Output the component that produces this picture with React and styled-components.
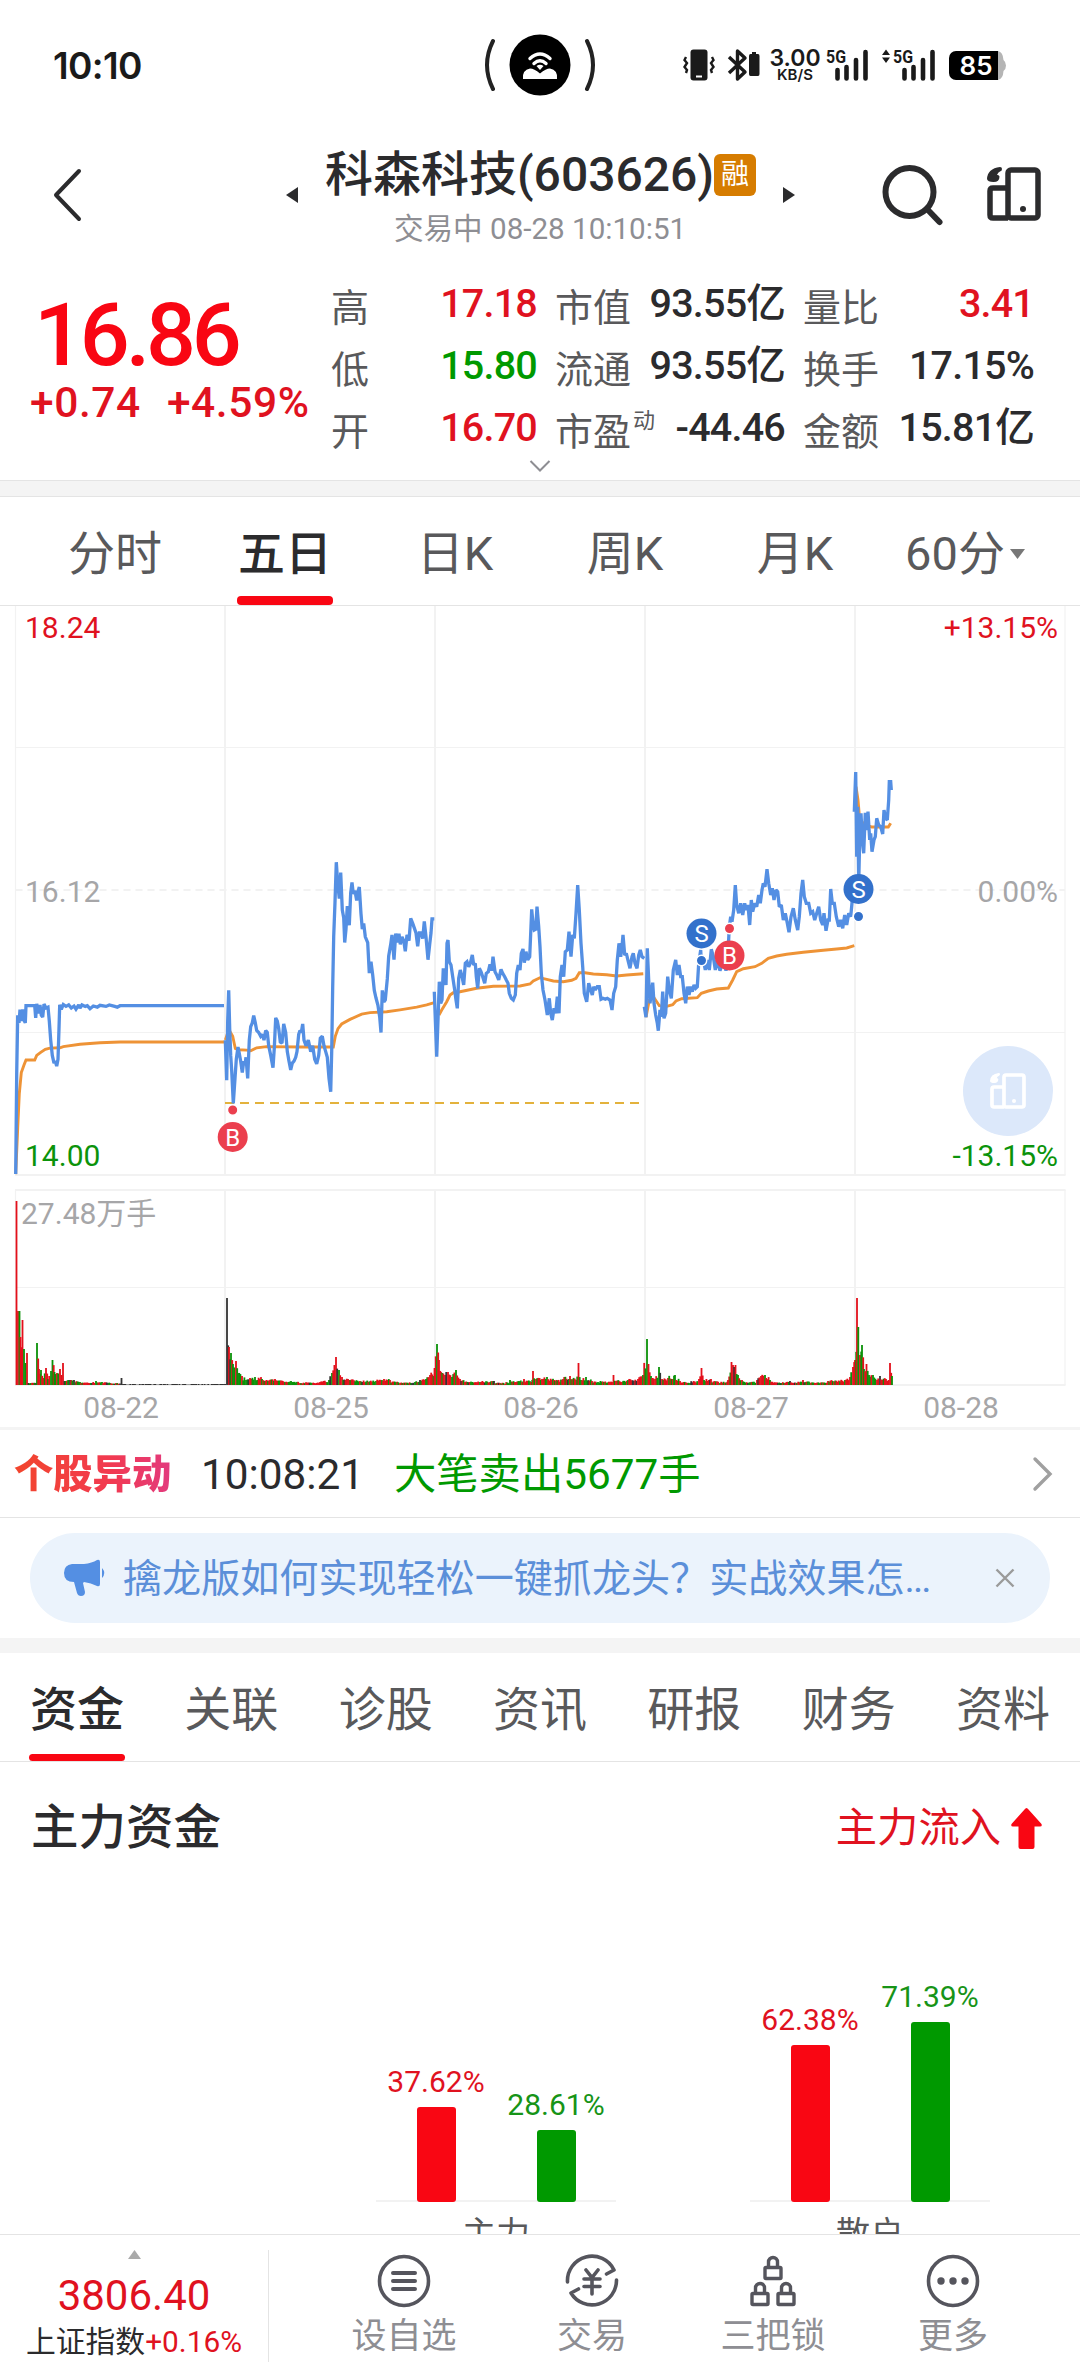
import React from 'react';
import styled, { createGlobalStyle } from 'styled-components';

const COLOR = {
  ink: '#2b2b2d',
  mid: '#59595b',
  weak: '#8e8e93',
  label: '#a6a6a8',
  red: '#f90613',
  textRed: '#e0121f',
  green: '#009900',
  line: '#e4e4e4',
  grid: '#f2f2f2',
  blue: '#548fe3',
  orange: '#ee9336',
};

const GlobalStyle = createGlobalStyle`
  * {
    box-sizing: border-box;
  }

  body {
    margin: 0;
    background: #fff;
    font-family: Roboto, "Noto Sans CJK SC", sans-serif;
    color: ${COLOR.ink};
  }

  svg {
    display: block;
    flex: none;
    overflow: visible;
  }
`

const Screen = styled.div`
  width: 1080px;
  height: 2376px;
  overflow: hidden;
  display: flex;
  flex-direction: column;
  background: #fff;
`

/* ---------- status bar ---------- */

const StatusBar = styled.div`
  height: 130px;
  flex: none;
  padding: 0 74px;
  display: grid;
  grid-template-columns: 1fr 116px 1fr;
  align-items: center;
`

const Clock = styled.div`
  margin-left: -21px;
  font-family: Inter, sans-serif;
  font-size: 37px;
  font-weight: 600;
  letter-spacing: -0.6px;
  color: #1a1a1a;
`

const StatusIcons = styled.div`
  display: flex;
  justify-content: flex-end;
  align-items: center;
`

const IconPair = styled.div`
  display: flex;
  gap: ${props => props.$gap}px;
`

const NetSpeed = styled.div`
  width: 50px;
  margin: 0 7px 0 10px;
  display: flex;
  flex-direction: column;
  align-items: center;
  font-family: Inter, sans-serif;
  font-weight: 600;
  color: #1a1a1a;
  font-size: 23px;
  line-height: 18px;
`

const NetUnit = styled.span`
  font-size: 15px;
  line-height: 15px;
`

const Battery = styled.div`
  width: 49px;
  height: 29px;
  margin-left: 13px;
  padding-left: 5px;
  border-radius: 7px 0 0 7px;
  background: #000;
  color: #fff;
  font: 600 26px/29px Inter, sans-serif;
  text-align: center;
`

/* ---------- header ---------- */

const Header = styled.header`
  height: 140px;
  flex: none;
  padding: 0 39px 0 53px;
  display: flex;
  align-items: flex-start;
`

const BackButton = styled.div`
  padding-top: 38px;
`

const HeaderCenter = styled.div`
  width: 508px;
  margin-left: 204px;
  display: grid;
  grid-template-columns: 39px 1fr 39px;
`

const Arrow = styled.div`
  padding-top: 57px;
  display: flex;
  justify-content: ${props => (props.$right ? 'flex-end' : 'flex-start')};
`

const TitleRow = styled.div`
  height: 78px;
  padding-top: 12px;
  display: flex;
  align-items: center;
  white-space: nowrap;
  font-size: 48px;
  font-weight: 500;
  line-height: 66px;
`

const MarginBadge = styled.span`
  width: 42px;
  height: 42px;
  margin-bottom: 1px;
  border-radius: 6px;
  background: #d67c00;
  color: #fff;
  font-size: 28px;
  font-weight: 400;
  line-height: 41px;
  text-align: center;
`

const SubTitle = styled.div`
  margin: 0 0 0 -1px;
  text-align: center;
  font-size: 29.6px;
  line-height: 42px;
  color: ${COLOR.weak};
  white-space: nowrap;
`

const HeaderActions = styled.div`
  margin: 37px 0 0 auto;
  display: flex;
  gap: 44px;
`

const SearchButton = styled.div`
  margin-top: -3px;
`

/* ---------- quote ---------- */

const Quote = styled.section`
  height: 210px;
  flex: none;
  padding: 7px 46px 0 30px;
  display: grid;
  grid-template-columns: 283px 206px 230px 231px;
  column-gap: 18px;
`

const PriceBlock = styled.div`
  color: ${COLOR.red};
  white-space: nowrap;
`

const Price = styled.div`
  margin-top: 14px;
  padding-left: 4px;
  font-size: 88px;
  font-weight: 500;
  line-height: 88px;
  letter-spacing: -4.2px;
`

const Change = styled.div`
  padding-top: 1px;
  display: flex;
  gap: 26px;
  color: ${COLOR.textRed};
  font-size: 42.5px;
  font-weight: 500;
  line-height: 46px;
  letter-spacing: 0.6px;
`

const QuoteColumn = styled.div`
  display: flex;
  flex-direction: column;
`

const QuoteItem = styled.div`
  height: 62px;
  display: flex;
  justify-content: space-between;
  white-space: nowrap;
`

const QuoteLabel = styled.span`
  font-size: 38px;
  line-height: 62px;
  color: ${COLOR.mid};

  sup {
    font-size: 22px;
    line-height: 20px;
    vertical-align: 17px;
    margin-left: 2px;
  }
`

const QuoteValue = styled.span`
  font-size: 39.5px;
  font-weight: 500;
  line-height: 54px;
  letter-spacing: -0.8px;
  color: ${props => props.$color || COLOR.ink};
`

const Expand = styled.div`
  height: 12px;
  margin-top: -20px;
  flex: none;
  display: flex;
  justify-content: center;
`

const Band = styled.div`
  height: ${props => props.$height}px;
  margin-top: ${props => props.$top || 0}px;
  flex: none;
  background: #f4f4f4;
  border: 0 solid ${COLOR.line};
  border-width: ${props => (props.$lined ? '1px 0' : '0')};
`

/* ---------- tabs ---------- */

const PeriodTabs = styled.nav`
  height: 109px;
  flex: none;
  padding: 0 30px;
  display: grid;
  grid-template-columns: repeat(6, 1fr);
  border-bottom: 1px solid ${COLOR.line};
`

const SectionTabs = styled.nav`
  height: 109px;
  flex: none;
  padding: 0 30px;
  display: flex;
  justify-content: space-between;
  border-bottom: 1px solid ${COLOR.line};
`

const Tab = styled.div`
  height: 108px;
  display: flex;
  flex-direction: column;
  align-items: center;
  justify-content: space-between;
  font-size: 47px;
  line-height: 114px;
  white-space: nowrap;
  font-weight: ${props => (props.$active ? 500 : 400)};
  color: ${props => (props.$active ? COLOR.ink : COLOR.mid)};

  &::after {
    content: "";
    width: 96px;
    height: ${props => props.$bar || 9}px;
    margin: -20px -1px 0;
    border-radius: 4px;
    background: ${props => (props.$active ? COLOR.red : 'transparent')};
  }
`

const TabText = styled.span`
  display: flex;
  align-items: center;
  gap: 5px;
`

/* ---------- chart ---------- */

const ChartArea = styled.section`
  height: 821px;
  flex: none;
  position: relative;
`

const FloatButton = styled.div`
  position: absolute;
  right: 27px;
  top: 440px;
  width: 90px;
  height: 90px;
  border-radius: 50%;
  background: #dce8fa;
  display: flex;
  align-items: center;
  justify-content: center;
`

const ChartText = styled.text`
  font-size: 30px;
  fill: ${props => props.$color || COLOR.label};
`

const MarkerText = styled.text`
  font-size: 24px;
  fill: #fff;
`

/* ---------- news ---------- */

const Movement = styled.div`
  height: 91px;
  flex: none;
  padding: 0 27px 0 14px;
  display: flex;
  align-items: center;
  border-top: 3px solid #f4f4f4;
  border-bottom: 1px solid ${COLOR.line};
  font-size: 42.3px;
  line-height: 60px;
  white-space: nowrap;
`

const MovementTag = styled.span`
  width: 160px;
  padding-top: 2px;
  font-size: 39.3px;
  font-weight: 900;
  background: linear-gradient(90deg, #f2452c, #f23a50 60%, #e23a80);
  background-clip: text;
  color: transparent;
`

const MovementTime = styled.span`
  width: 193px;
  margin-left: 27px;
  padding-top: 3px;
`

const MovementText = styled.span`
  flex: 1;
  padding-top: 3px;
  color: ${COLOR.green};
`

const Notice = styled.div`
  height: 90px;
  flex: none;
  margin: 15px 30px;
  padding: 0 35px 0 34px;
  display: flex;
  align-items: center;
  border-radius: 45px;
  background: #ebf3fc;
  color: #5b8fd9;
`

const NoticeText = styled.span`
  flex: 1;
  margin-left: 16px;
  padding-top: 3px;
  font-size: 39.1px;
  line-height: 87px;
  white-space: nowrap;
`

const Dots = styled.span`
  letter-spacing: -2px;
`

/* ---------- fund ---------- */

const Fund = styled.section`
  height: 472px;
  flex: none;
  overflow: hidden;
  display: flex;
  flex-direction: column;
`

const FundHead = styled.div`
  height: 130px;
  flex: none;
  padding: 2px 38px 0 31px;
  display: flex;
  align-items: center;
  justify-content: space-between;
`

const FundTitle = styled.h2`
  margin: 0;
  font-size: 47.5px;
  font-weight: 500;
  line-height: 70px;
`

const FundFlow = styled.div`
  display: flex;
  align-items: center;
  gap: 10px;
  color: ${COLOR.textRed};
  font-size: 41.3px;
  line-height: 60px;
`

const FundChart = styled.div`
  height: 360px;
  flex: none;
  padding-left: 376px;
  display: flex;
  gap: 134px;
`

const FundGroup = styled.div`
  width: 240px;
`

const FundBars = styled.div`
  height: 310px;
  display: flex;
  align-items: flex-end;
  justify-content: space-around;
  background: linear-gradient(#f2f2f2, #f2f2f2) bottom / 100% 2px no-repeat;
`

const FundColumn = styled.div`
  width: 100px;
  display: flex;
  flex-direction: column;
  align-items: center;
  font-size: 30px;
  line-height: 36px;
  gap: 7px;
  color: ${props => (props.$up ? COLOR.textRed : '#179417')};
`

const FundBar = styled.div`
  width: 39px;
  border-radius: 3px;
  background: ${props => (props.$up ? COLOR.red : COLOR.green)};
`

const FundName = styled.div`
  margin-top: 7px;
  text-align: center;
  font-size: 34px;
  line-height: 50px;
  color: ${COLOR.mid};
`

/* ---------- bottom bar ---------- */

const BottomBar = styled.footer`
  height: 142px;
  flex: none;
  display: flex;
  background: #fff;
  border-top: 1px solid ${COLOR.line};
`

const IndexBox = styled.div`
  width: 269px;
  height: 112px;
  margin-top: 15px;
  border-right: 1px solid ${COLOR.line};
  display: flex;
  flex-direction: column;
  align-items: center;
  white-space: nowrap;
`

const IndexValue = styled.div`
  margin-top: 12px;
  font-size: 42px;
  line-height: 50px;
  color: ${COLOR.textRed};
`

const IndexName = styled.div`
  font-size: 29.8px;
  line-height: 42px;

  span {
    color: ${COLOR.textRed};
  }
`

const Actions = styled.div`
  margin-left: 41px;
  display: grid;
  grid-template-columns: 188px 188px 174px 186px;
`

const Action = styled.div`
  padding-top: 19px;
  display: flex;
  flex-direction: column;
  align-items: center;
  font-size: 35px;
  line-height: 58px;
  color: ${COLOR.weak};
`

/* ---------- icons ---------- */

const HotspotIcon = () => (
  <svg width="116" height="64" viewBox="0 0 116 64">
    <path d="M11 8Q-1 32 11 56M105 8q12 24 0 48" fill="none" stroke="#222" strokeWidth="4" strokeLinecap="round" />
    <circle cx="58" cy="32" r="30.5" fill="#000" />
    <path d="M48 25.500q10-9 20 0M52 30.500q6-5.500 12 0" fill="none" stroke="#fff" strokeWidth="3.400" strokeLinecap="round" />
    <path d="M58 37l-3.500-4q3.500-2.500 7 0z" fill="#fff" />
    <path d="M41 46q-1-9 7-10.500 4 0 10 5 6-5 10-5 8 1.500 7 10.500z" fill="#fff" />
  </svg>
)

const VibrateIcon = () => (
  <svg width="32" height="32" viewBox="0 0 32 32">
    <rect x="7.500" y="0.500" width="17" height="31" rx="3" fill="#1a1a1a" />
    <path d="M13 27.500h6" stroke="#fff" strokeWidth="2" />
    <path d="M3 8l-1.500 3L4 14l-2.500 4L4 21l-1 3M29 8l1.500 3L28 14l2.500 4L28 21l1 3" fill="none" stroke="#1a1a1a" strokeWidth="2.400" />
  </svg>
)

const BluetoothIcon = () => (
  <svg width="33" height="32" viewBox="0 0 33 32">
    <path d="M2 8l16 15-7.500 7V2l7.500 7L2 24" fill="none" stroke="#1a1a1a" strokeWidth="3.400" strokeLinejoin="round" />
    <path d="M25 3h4v2h2q1.500 0 1.500 2v18q0 2-1.500 2h-7.500q-1.500 0-1.500-2V7q0-2 1.500-2H25z" fill="#1a1a1a" />
  </svg>
)

const SignalIcon = ({arrows}) => (
  <svg width={arrows ? 54 : 42} height="32" viewBox={arrows ? '-12 0 54 32' : '0 0 42 32'}>
    {arrows && <path d="M-12 6l4-5.500L-4 6zM-12 8.500l4 5.500 4-5.500z" fill="#1a1a1a" />}
    <text x="-1" y="13.500" fontSize="18" fontWeight="700" fill="#1a1a1a" textLength="20" lengthAdjust="spacingAndGlyphs">5G</text>
    <path d="M10.500 21v8.500M19.500 18v11.500M29 11v18.500M38.500 3v26.500" stroke="#1a1a1a" strokeWidth="4.600" strokeLinecap="round" />
  </svg>
)

const BackIcon = () => (
  <svg width="29" height="54" viewBox="0 0 29 54">
    <path d="M26 3L3 27l23 24" fill="none" stroke={COLOR.ink} strokeWidth="4" strokeLinecap="round" strokeLinejoin="round" />
  </svg>
)

const SearchIcon = () => (
  <svg width="61" height="62" viewBox="0 0 61 62">
    <circle cx="27.500" cy="28" r="24" fill="none" stroke={COLOR.ink} strokeWidth="6" />
    <path d="M45 45l12.500 13" stroke={COLOR.ink} strokeWidth="6" strokeLinecap="round" />
  </svg>
)

const BoardIcon = ({size, color}) => (
  <svg width={size} height={size} viewBox="0 0 54 54">
    <g fill="none" stroke={color} strokeWidth="5.500" strokeLinejoin="round">
      <rect x="21" y="3" width="30" height="48" rx="3" />
      <path d="M21 21H6q-3 0-3 3v24q0 3 3 3h15" />
    </g>
    <circle cx="36" cy="42" r="3" fill={color} />
    <path d="M13 0q2 0 2 2t-2 2.500-3 3.500q2-.5 2.500 1.500 0 5.500-6 5.500T0 12Q.5 1.500 13 0z" fill={color} />
  </svg>
)

const HornIcon = () => (
  <svg width="43" height="38" viewBox="0 0 43 38">
    <path d="M0 14Q0 6 8 5h12q8-1 13-4 3-1 3 2v22q0 3-3 2-6-3-13-4l-1 1 2 9q0 4-4 4-3 0-4-3L10 23Q0 23 0 14z" fill={COLOR.blue} />
    <path d="M38 9q4.500 5 0 10z" fill={COLOR.blue} />
  </svg>
)

const ListIcon = () => (
  <svg width="54" height="54" viewBox="0 0 54 54" fill="none" stroke="#55555d">
    <circle cx="27" cy="27" r="24.500" strokeWidth="3.600" />
    <path d="M16 19h22M16 27h22M16 35h22" strokeWidth="4" strokeLinecap="round" />
  </svg>
)

const TradeIcon = () => (
  <svg width="54" height="54" viewBox="0 0 54 54" fill="none" stroke="#55555d" strokeWidth="3.600" strokeLinecap="round">
    <path d="M2.500 28A24.500 24.500 0 0 1 49 16l-7.500 4M51.500 26A24.500 24.500 0 0 1 6 39l7.500-4" strokeLinejoin="round" />
    <path d="M21 16l6 7.500L33 16M19 25h16M19 32.500h16M27 24v16" />
  </svg>
)

const Lock = ({x, y}) => (
  <g transform={`translate(${x} ${y})`}>
    <rect x="1.500" y="11.500" width="16" height="11" rx="1" />
    <path d="M5 11V6a4.500 4.500 0 0 1 9 0v5" />
  </g>
)

const LocksIcon = () => (
  <svg width="54" height="54" viewBox="0 0 54 54" fill="none" stroke="#55555d" strokeWidth="3.400">
    <Lock x={17.5} y={2} />
    <Lock x={4.5} y={28} />
    <Lock x={30.5} y={28} />
  </svg>
)

const MoreIcon = () => (
  <svg width="54" height="54" viewBox="0 0 54 54">
    <circle cx="27" cy="27" r="24.500" fill="none" stroke="#55555d" strokeWidth="3.600" />
    <g fill="#55555d">
      <circle cx="15" cy="27" r="3.700" />
      <circle cx="27" cy="27" r="3.700" />
      <circle cx="39" cy="27" r="3.700" />
    </g>
  </svg>
)

/* ---------- chart data ---------- */

// each series keeps its own sampling grid: origin + units per pixel
const GRID_A = {x: 0, y: 600, kx: 3, ky: 2.613};
const GRID_B = {x: 420, y: 800, kx: 3, ky: 3};
const GRID_C = {x: 640, y: 740, kx: 3, ky: 3};

const PRICES = [
  {grid: GRID_A, data: '47,1500 50,1240 53,1085 57,1105 60,1070 64,1100 68,1070 72,1098 76,1105 78,1060 104,1060 107,1092 110,1055 116,1080 120,1058 124,1085 128,1090 132,1056 138,1066 144,1064 148,1100 152,1150 157,1190 162,1210 166,1205 170,1218 174,1200 177,1120 179,1058 184,1070 190,1057 198,1062 206,1058 214,1066 222,1061 228,1069 236,1058 240,1066 246,1058 256,1062 262,1060 270,1068 280,1061 292,1064 300,1059 318,1062 328,1058 344,1062 352,1064 360,1060 672,1060'},
  {grid: GRID_A, data: '676,1150 680,1255 683,1100 686,1020 689,1120 692,1190 695,1230 700,1315 705,1250 709,1200 714,1168 718,1185 722,1205 727,1235 731,1205 735,1215 738,1195 743,1250 748,1150 752,1115 757,1105 761,1086 766,1105 770,1125 776,1130 782,1140 787,1135 792,1150 797,1125 802,1130 806,1165 812,1190 819,1222 823,1170 827,1092 832,1100 836,1120 841,1155 846,1158 851,1108 857,1130 862,1180 867,1205 872,1228 877,1210 882,1205 887,1195 891,1180 896,1135 900,1125 904,1130 908,1108 912,1150 918,1165 925,1150 932,1180 938,1165 944,1200 950,1212 956,1190 961,1145 967,1140 972,1165 977,1180 982,1195 987,1250 992,1285 995,1180 998,1010 1001,880 1005,790 1009,685 1013,740 1018,780 1022,712 1027,810 1031,830 1034,895 1038,860 1042,800 1048,850 1052,765 1056,738 1060,768 1065,760 1070,785 1074,762 1078,750 1083,820 1087,860 1091,845 1096,880 1103,895 1108,975 1113,945 1118,980 1123,1020 1128,1040 1134,1060 1139,1090 1143,1130 1147,1020 1152,1050 1156,1045 1162,990 1166,930 1172,900 1176,875 1182,940 1187,872 1193,895 1197,872 1201,900 1206,880 1211,890 1216,918 1221,875 1227,890 1232,832 1238,845 1244,860 1248,870 1253,905 1258,870 1264,870 1268,885 1273,840 1278,880 1284,940 1289,900 1293,870 1296,833 1303,833'},
  {grid: GRID_B, data: '43,575 50,770 54,660 58,545 62,610 66,600 70,505 74,530 78,555 81,430 84,420 88,485 93,495 98,530 104,570 108,600 112,625 116,535 121,510 126,530 131,555 136,490 141,485 146,500 151,490 157,465 161,495 166,490 169,530 173,565 178,505 183,515 188,530 194,550 199,520 205,515 210,493 215,512 219,470 225,515 230,525 236,540 243,508 248,520 254,530 259,540 264,550 268,580 274,595 280,600 286,585 290,520 295,495 300,510 304,460 309,447 313,488 318,455 323,480 329,470 332,400 335,328 339,370 343,390 347,388 351,320 356,380 360,440 364,520 369,570 375,600 382,645 388,595 392,640 397,660 402,625 407,640 412,590 417,640 421,530 426,495 431,530 436,455 442,450 447,395 453,470 458,405 463,415 468,340 473,255 478,330 483,430 488,500 493,580 500,605 506,550 512,570 517,585 521,560 526,570 532,560 538,560 543,598 549,595 556,598 562,595 570,600 576,630 581,580 587,560 592,480 597,430 602,470 606,440 609,405 614,465 619,460 625,485 630,505 636,470 640,460 645,490 651,505 656,465 661,450 666,470 673,475'},
  {grid: GRID_C, data: '13,800 18,832 22,625 26,720 30,790 38,728 42,790 47,825 52,850 55,872 60,810 64,830 68,755 72,835 77,820 83,710 88,750 94,775 100,690 107,660 112,705 117,675 122,710 127,710 132,760 137,790 142,740 147,765 152,740 157,755 162,735 167,745 172,740 176,670 182,630 184,665 190,660 196,690 202,660 208,690 214,628 220,650 226,690 232,660 240,692 250,660 258,692 264,640 268,560 272,530 276,545 281,510 286,435 290,495 296,520 302,490 308,525 314,490 318,510 324,495 329,555 334,480 338,515 344,490 350,500 356,465 361,490 366,450 370,430 375,440 381,388 386,430 392,465 397,445 402,480 408,450 413,455 418,500 424,495 430,540 436,520 442,550 447,577 453,530 460,505 466,540 473,570 478,530 483,460 488,420 493,470 499,490 506,490 512,520 518,515 524,540 530,520 536,500 542,540 548,555 552,520 558,572 564,540 568,540 572,447 577,490 583,490 589,530 596,560 602,540 608,565 614,525 620,555 626,520 632,530 637,480'},
  {grid: GRID_C, data: '643,215 647,96 650,350 653,200 656,430 659,300 663,220 667,300 671,340 676,218 680,270 684,215 689,300 692,280 696,335 702,300 706,290 710,235 716,255 722,260 728,282 732,210 737,235 742,240 746,180 748,125 752,125 754,150'},
];

const AVERAGES = [
  {grid: GRID_A, data: '47,1500 53,1380 58,1290 64,1235 72,1215 78,1202 104,1202 110,1190 122,1182 136,1174 150,1171 180,1170 190,1167 240,1161 300,1157 360,1155 672,1155'},
  {grid: GRID_A, data: '676,1150 682,1135 690,1128 698,1140 706,1172 716,1175 740,1176 752,1178 770,1170 800,1167 900,1168 1000,1168 1006,1140 1014,1120 1025,1108 1050,1096 1085,1082 1110,1078 1160,1076 1200,1071 1250,1064 1280,1058 1303,1052'},
  {grid: GRID_B, data: '57,645 65,630 80,605 90,585 100,578 120,575 170,565 220,559 300,558 330,552 340,543 360,533 380,538 400,543 430,545 455,541 468,535 478,518 495,518 520,522 560,524 590,528 620,525 670,521'},
  {grid: GRID_C, data: '18,832 28,780 40,770 50,785 58,797 80,799 98,794 108,783 125,776 172,773 184,760 205,753 230,747 265,744 278,720 290,695 310,686 345,680 365,670 385,655 410,648 440,643 490,637 550,631 590,627 620,624 643,617'},
  {grid: GRID_C, data: '648,140 654,180 658,225 664,245 680,255 695,261 745,261 752,250'},
];

const toPoints = ({grid, data}) =>
  data.split(' ').map(pair => {
    const [x, y] = pair.split(',').map(Number);
    return `${(grid.x + x / grid.kx).toFixed(1)},${(grid.y + y / grid.ky).toFixed(1)}`;
  }).join(' ');

// x, height and side of the bars that stand out; the ones between are filled in
const VOLUME_KEYS = [
  [16.5, 184, 'r'], [18, 74, 'r'], [19.5, 74, 'g'], [20.5, 48, 'r'], [22.5, 65, 'r'], [24, 36, 'g'], [25.5, 22, 'g'], [27, 32, 'r'], [28.5, 2, 'k'], [36, 2, 'k'], [37, 42, 'g'], [39, 16, 'r'], [41, 15, 'g'], [43.5, 7, 'r'], [46, 17, 'r'], [48, 6, 'g'], [51, 14, 'g'], [52.5, 25, 'g'], [54.5, 13, 'g'], [57, 12, 'r'], [60, 16, 'r'], [61.5, 10, 'r'], [63, 22, 'r'], [64.5, 4, 'k'],
  [70, 5, 'k'], [74, 5, 'k'], [80, 3, 'g'], [92, 2, 'k'], [96, 4, 'g'], [102, 3, 'g'], [110, 2, 'g'], [120, 1.5, 'k'], [121.5, 7, 'k'], [123, 1, 'k'], [224, 1, 'k'],
  [227, 87, 'k'], [229, 38, 'r'], [231, 32, 'g'], [233, 21, 'g'], [236, 24, 'r'], [238, 12, 'g'], [242, 9, 'r'], [246, 5, 'g'], [250, 7, 'r'], [255, 8, 'g'], [262, 6, 'g'], [268, 4, 'g'], [275, 6, 'r'], [285, 3, 'g'], [291, 4, 'g'], [300, 2, 'r'], [320, 3, 'r'], [329, 5, 'g'], [332, 12, 'g'], [336, 28, 'r'], [339, 15, 'g'], [342, 8, 'r'], [348, 6, 'r'], [360, 4, 'r'], [376, 4, 'g'], [384, 6, 'r'], [390, 5, 'r'], [400, 2, 'r'], [415, 3, 'g'], [420, 5, 'k'], [426, 6, 'g'], [430, 10, 'r'], [434.5, 17, 'r'],
  [437, 41, 'g'], [439, 25, 'r'], [441, 13, 'r'], [445, 10, 'r'], [448, 13, 'r'], [452, 8, 'g'], [456, 15, 'g'], [460, 6, 'r'], [465, 3, 'r'], [480, 3, 'g'], [494, 4, 'k'], [505, 1, 'r'], [510, 5, 'g'], [516, 3, 'r'], [524, 6, 'r'], [531, 3, 'r'], [533, 14, 'r'], [536, 6, 'r'], [547, 8, 'g'], [555, 4, 'g'], [563, 6, 'r'], [570, 9, 'r'], [576, 5, 'r'], [578.5, 22, 'r'], [581, 5, 'g'], [586, 8, 'g'], [592, 4, 'r'], [604, 3, 'g'], [612, 3, 'r'], [613.5, 10, 'r'], [616, 4, 'r'], [628, 5, 'g'], [638, 6, 'r'], [643, 10, 'g'],
  [647, 46, 'g'], [648.5, 21, 'r'], [651, 9, 'g'], [655, 6, 'r'], [659, 18, 'g'], [662, 6, 'r'], [668, 7, 'r'], [675, 10, 'g'], [680, 4, 'r'], [690, 2, 'g'], [699, 6, 'r'], [701.5, 17, 'r'], [704, 5, 'g'], [711, 6, 'r'], [720, 2, 'g'], [728, 5, 'r'], [731.5, 23, 'r'], [733, 20, 'r'], [735.5, 20, 'r'], [738, 10, 'g'], [742, 5, 'r'], [748, 2, 'k'], [757, 5, 'r'], [761, 9, 'r'], [765, 10, 'g'], [770, 5, 'g'], [778, 2, 'k'], [790, 4, 'k'], [797, 2, 'g'], [803, 5, 'r'], [810, 2, 'g'], [828, 4, 'r'], [845, 5, 'g'], [850, 8, 'r'], [853, 18, 'r'], [855, 25, 'r'],
  [857, 87, 'r'], [858.3, 58, 'g'], [860, 30, 'r'], [862, 40, 'g'], [864, 16, 'g'], [866.5, 21, 'r'], [869, 10, 'g'], [873, 10, 'g'], [877, 5, 'r'], [880, 9, 'k'], [886, 6, 'r'], [888.5, 5, 'r'], [890, 22, 'r'], [892, 9, 'g'],
];

const VOLUME_COLOR = {r: '#e3101b', g: '#0a9208', k: '#333'};

const volumeBars = () => {
  const bars = [];
  let seed = 7;
  const random = () => {
    seed = (seed * 16807) % 2147483647;
    return seed / 2147483647;
  };

  VOLUME_KEYS.forEach(([x, h, side], i) => {
    const next = VOLUME_KEYS[i + 1];
    bars.push({x, h, side});
    if (!next) return;
    for (let p = x + 1.2; p < next[0] - 0.7; p += 1.2) {
      const base = Math.min(h, next[1]) + Math.abs(next[1] - h) * 0.35;
      const quiet = p > 123 && p < 226;
      bars.push({
        x: p,
        h: quiet ? (random() > 0.5 ? 1 : 0.3) : base * (0.7 + random() * 0.5),
        side: quiet ? 'k' : (random() > 0.5 ? 'r' : random() > 0.12 ? 'g' : 'k'),
      });
    }
  });
  return bars;
}

const BARS = volumeBars();

const Marker = ({x, y, dotY, side}) => {
  const color = side === 'B' ? '#eb3f4e' : '#3371cb';
  return (
    <g>
      <circle cx={x} cy={dotY} r="5.200" fill={color} stroke="#fff" strokeWidth="1.400" />
      <circle cx={x} cy={y} r="15" fill={color} />
      <MarkerText x={x} y={y + 8.5} textAnchor="middle">{side}</MarkerText>
    </g>
  )
}

const Chart = () => (
  <ChartArea>
    <svg width="1080" height="821" viewBox="0 606 1080 821">
      <g fill="none" stroke={COLOR.grid}>
        <path d="M15.500 606V1175M1065 606V1175M15.500 747.500H1065M15.500 1032.500H1065" strokeWidth="1.200" />
        <path d="M225 606V1175M435 606V1175M645 606V1175M855 606V1175M15 1175H1065.500" strokeWidth="2" />
        <path d="M15.500 890H1065" strokeWidth="2" strokeDasharray="7 5" />
        <path d="M15.500 1190V1385M1065 1190V1385M15.500 1287.500H1065" strokeWidth="1.200" />
        <path d="M225 1190V1385M435 1190V1385M645 1190V1385M855 1190V1385M15 1190H1065.500M15 1385H1065.500" strokeWidth="2" />
      </g>

      <path d="M225 1103H640" stroke="#e3b23c" strokeWidth="2" strokeDasharray="9 6" />

      <g fill="none" strokeLinejoin="miter" strokeMiterlimit="2">
        {AVERAGES.map((series, i) => <polyline key={i} points={toPoints(series)} stroke={COLOR.orange} strokeWidth="2.900" />)}
        {PRICES.map((series, i) => <polyline key={i} points={toPoints(series)} stroke={COLOR.blue} strokeWidth="3.300" />)}
      </g>

      <ChartText x="25" y="638" $color={COLOR.textRed}>18.24</ChartText>
      <ChartText x="25" y="902">16.12</ChartText>
      <ChartText x="25" y="1166" $color="#0b930b">14.00</ChartText>
      <ChartText x="1058" y="638" textAnchor="end" $color={COLOR.textRed}>+13.15%</ChartText>
      <ChartText x="1058" y="902" textAnchor="end">0.00%</ChartText>
      <ChartText x="1058" y="1166" textAnchor="end" $color="#0b930b">-13.15%</ChartText>

      <Marker x={232.7} y={1137} dotY={1110} side="B" />
      <Marker x={701.5} y={933.5} dotY={960.5} side="S" />
      <Marker x={729.5} y={955.5} dotY={928.5} side="B" />
      <Marker x={858.5} y={889} dotY={916.5} side="S" />

      {BARS.map((bar, i) => (
        <rect key={i} x={bar.x - 0.9} y={1385 - bar.h} width="1.800" height={bar.h} fill={VOLUME_COLOR[bar.side]} />
      ))}
      <ChartText x="21" y="1224">27.48万手</ChartText>

      {['08-22', '08-25', '08-26', '08-27', '08-28'].map((day, i) => (
        <ChartText key={day} x={121 + i * 210} y="1418" textAnchor="middle">{day}</ChartText>
      ))}
    </svg>

    <FloatButton>
      <BoardIcon size={36} color="#fff" />
    </FloatButton>
  </ChartArea>
)

/* ---------- page ---------- */

const QUOTES = [
  [['高', '17.18', COLOR.textRed], ['低', '15.80', COLOR.green], ['开', '16.70', COLOR.textRed]],
  [['市值', '93.55亿'], ['流通', '93.55亿'], ['市盈', '-44.46', null, '动']],
  [['量比', '3.41', COLOR.textRed], ['换手', '17.15%'], ['金额', '15.81亿']],
];

const FUNDS = [
  {name: '主力', bars: [{value: '37.62%', height: 95, up: true}, {value: '28.61%', height: 72}]},
  {name: '散户', bars: [{value: '62.38%', height: 157, up: true}, {value: '71.39%', height: 180}]},
];

const App = () => {
  return (
    <Screen>
      <GlobalStyle />

      <StatusBar>
        <Clock>10:10</Clock>
        <HotspotIcon />
        <StatusIcons>
          <IconPair $gap={12}>
            <VibrateIcon />
            <BluetoothIcon />
          </IconPair>
          <NetSpeed>
            3.00
            <NetUnit>KB/S</NetUnit>
          </NetSpeed>
          <IconPair $gap={13}>
            <SignalIcon />
            <SignalIcon arrows />
          </IconPair>
          <Battery>85</Battery>
          <svg width="8" height="29" viewBox="0 0 8 29">
            <path d="M0 0q5 1 5.500 9Q8 11 8 14.500T5.500 20Q5 28 0 29z" fill="#b5b5b5" />
          </svg>
        </StatusIcons>
      </StatusBar>

      <Header>
        <BackButton><BackIcon /></BackButton>
        <HeaderCenter>
          <Arrow>
            <svg width="12" height="16" viewBox="0 0 12 16"><path d="M12 0v16L0 8z" fill={COLOR.ink} /></svg>
          </Arrow>
          <div>
            <TitleRow>
              科森科技(603626)
              <MarginBadge>融</MarginBadge>
            </TitleRow>
            <SubTitle>交易中 08-28 10:10:51</SubTitle>
          </div>
          <Arrow $right>
            <svg width="12" height="16" viewBox="0 0 12 16"><path d="M0 0v16l12-8z" fill={COLOR.ink} /></svg>
          </Arrow>
        </HeaderCenter>
        <HeaderActions>
          <SearchButton><SearchIcon /></SearchButton>
          <BoardIcon size={54} color={COLOR.ink} />
        </HeaderActions>
      </Header>

      <Quote>
        <PriceBlock>
          <Price>16.86</Price>
          <Change>
            <span>+0.74</span>
            <span>+4.59%</span>
          </Change>
        </PriceBlock>
        {QUOTES.map((column, i) => (
          <QuoteColumn key={i}>
            {column.map(([label, value, color, sup]) => (
              <QuoteItem key={label}>
                <QuoteLabel>{label}{sup && <sup>{sup}</sup>}</QuoteLabel>
                <QuoteValue $color={color}>{value}</QuoteValue>
              </QuoteItem>
            ))}
          </QuoteColumn>
        ))}
      </Quote>
      <Expand>
        <svg width="22" height="12" viewBox="0 0 22 12">
          <path d="M1.500 1L11 10.500 20.500 1" fill="none" stroke={COLOR.weak} strokeWidth="2" />
        </svg>
      </Expand>
      <Band $height={17} $top={8} $lined />

      <PeriodTabs>
        <Tab><TabText>分时</TabText></Tab>
        <Tab $active><TabText>五日</TabText></Tab>
        <Tab><TabText>日K</TabText></Tab>
        <Tab><TabText>周K</TabText></Tab>
        <Tab><TabText>月K</TabText></Tab>
        <Tab>
          <TabText>
            60分
            <svg width="15" height="10" viewBox="0 0 15 10"><path d="M0 0h15L7.500 10z" fill="#777" /></svg>
          </TabText>
        </Tab>
      </PeriodTabs>

      <Chart />

      <Movement>
        <MovementTag>个股异动</MovementTag>
        <MovementTime>10:08:21</MovementTime>
        <MovementText>大笔卖出5677手</MovementText>
        <svg width="21" height="34" viewBox="0 0 21 34">
          <path d="M3 2l15 15L3 32" fill="none" stroke="#a0a0a0" strokeWidth="3.400" strokeLinecap="round" />
        </svg>
      </Movement>

      <Notice>
        <HornIcon />
        <NoticeText>擒龙版如何实现轻松一键抓龙头？实战效果怎<Dots>...</Dots></NoticeText>
        <svg width="20" height="20" viewBox="0 0 20 20">
          <path d="M1.500 1.500l17 17M18.500 1.500l-17 17" stroke="#9a9a9a" strokeWidth="2.400" />
        </svg>
      </Notice>
      <Band $height={15} />

      <SectionTabs>
        {['资金', '关联', '诊股', '资讯', '研报', '财务', '资料'].map((name, i) => (
          <Tab key={name} $active={i === 0} $bar={7}><TabText>{name}</TabText></Tab>
        ))}
      </SectionTabs>

      <Fund>
        <FundHead>
          <FundTitle>主力资金</FundTitle>
          <FundFlow>
            主力流入
            <svg width="31" height="41" viewBox="0 0 31 41">
              <path d="M15.500 0q1 0 2 1.500L30.500 16q1 2.500-1.500 2.500h-5.500V39q0 2-2 2h-12q-2 0-2-2V18.500H2Q-.5 18.500.5 16l13-14.500q1-1.500 2-1.500z" fill={COLOR.red} />
            </svg>
          </FundFlow>
        </FundHead>
        <FundChart>
          {FUNDS.map(group => (
            <FundGroup key={group.name}>
              <FundBars>
                {group.bars.map(bar => (
                  <FundColumn key={bar.value} $up={bar.up}>
                    {bar.value}
                    <FundBar $up={bar.up} style={{height: bar.height}} />
                  </FundColumn>
                ))}
              </FundBars>
              <FundName>{group.name}</FundName>
            </FundGroup>
          ))}
        </FundChart>
      </Fund>

      <BottomBar>
        <IndexBox>
          <svg width="13" height="9" viewBox="0 0 13 9"><path d="M6.500 0L13 9H0z" fill="#aaa" /></svg>
          <IndexValue>3806.40</IndexValue>
          <IndexName>上证指数<span>+0.16%</span></IndexName>
        </IndexBox>
        <Actions>
          <Action><ListIcon />设自选</Action>
          <Action><TradeIcon />交易</Action>
          <Action><LocksIcon />三把锁</Action>
          <Action><MoreIcon />更多</Action>
        </Actions>
      </BottomBar>
    </Screen>
  )
}

export default App;
